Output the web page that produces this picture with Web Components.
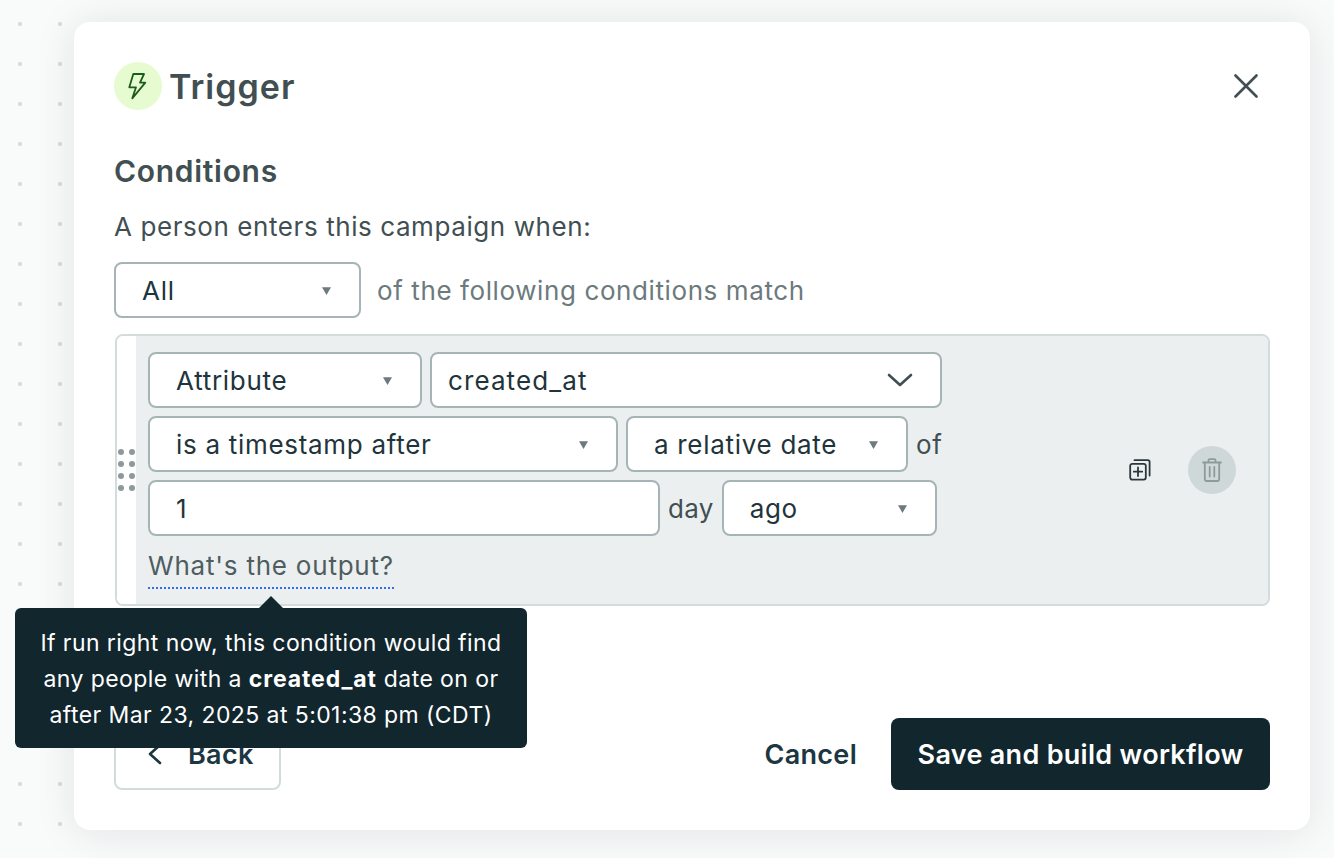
<!DOCTYPE html>
<html lang="en">
<head>
<meta charset="utf-8">
<title>Trigger</title>
<style>
  html, body { margin: 0; height: 100%; }
  body {
    width: 1334px;
    height: 858px;
    overflow: hidden;
    font-family: Inter, "Liberation Sans", sans-serif;
    background-color: #f9fafa;
  }
</style>
</head>
<body>
<trigger-canvas>
  <trigger-card>
    <card-header slot="header">Trigger</card-header>
    <h-title>Conditions</h-title>
    <p-text>A person enters this campaign when:</p-text>
    <match-row></match-row>
    <condition-box>
      <box-row>
        <pick-list style="width:274px" label="Attribute"></pick-list>
        <pick-list style="width:512px;letter-spacing:1.1px" label="created_at" kind="chevron"></pick-list>
      </box-row>
      <box-row>
        <pick-list style="width:470px" label="is a timestamp after"></pick-list>
        <pick-list style="width:282px" label="a relative date"></pick-list>
        <span>of</span>
      </box-row>
      <box-row>
        <pick-list style="width:512px" label="1" kind="input"></pick-list>
        <span style="letter-spacing:0.3px">day</span>
        <pick-list style="width:215px" label="ago"></pick-list>
      </box-row>
      <output-link slot="link">What's the output?</output-link>
    </condition-box>
    <card-footer slot="footer"></card-footer>
    <output-tip slot="overlay">If run right now, this condition would find any people with a <b>created_at</b> date on or after Mar 23, 2025 at 5:01:38 pm (CDT)</output-tip>
  </trigger-card>
</trigger-canvas>

<script>
class TriggerCanvas extends HTMLElement {
  constructor() {
    super();
    this.attachShadow({ mode: "open" });
    this.shadowRoot.innerHTML = `
    <style>
      :host {
        display: block;
        width: 1334px;
        height: 858px;
        box-sizing: border-box;
        padding: 22px 24px 28px 74px;
        background-color: #f9fafa;
        background-image:
          linear-gradient(to right, transparent 80px, #f9fafa 80px),
          radial-gradient(circle at 20px 24px, #d5dee0 0, #d5dee0 1.9px, transparent 2.4px);
        background-size: 100% 100%, 40px 40px;
      }
    </style>
    <slot></slot>`;
  }
}

class TriggerCard extends HTMLElement {
  constructor() {
    super();
    this.attachShadow({ mode: "open" });
    this.shadowRoot.innerHTML = `
    <style>
      :host {
        display: flex;
        flex-direction: column;
        position: relative;
        box-sizing: border-box;
        height: 808px;
        padding: 40px;
        background: #fff;
        border-radius: 16px;
        box-shadow: 0 2px 40px rgba(18, 38, 46, 0.1);
      }
      .foot { margin-top: auto; }
    </style>
    <slot name="header"></slot>
    <slot></slot>
    <div class="foot"><slot name="footer"></slot></div>
    <slot name="overlay"></slot>`;
  }
}

class CardHeader extends HTMLElement {
  constructor() {
    super();
    this.attachShadow({ mode: "open" });
    this.shadowRoot.innerHTML = `
    <style>
      :host {
        display: flex;
        align-items: center;
        height: 48px;
        color: #414f52;
        font-size: 34px;
        font-weight: 600;
        letter-spacing: 1px;
      }
      .badge {
        width: 48px;
        height: 48px;
        border-radius: 50%;
        background: #e6fbd0;
        display: flex;
        align-items: center;
        justify-content: center;
        margin-right: 7px;
      }
      .close { margin-left: auto; margin-right: 12px; display: block; }
    </style>
    <div class="badge">
      <svg width="20" height="28" viewBox="0 0 20 28" fill="none" stroke="#1d5c1c" stroke-width="1.8" stroke-linejoin="round">
        <path d="M5.3 2H16L12 10.700H17.300L4.300 26.300L8 15.300H1.300Z"/>
      </svg>
    </div>
    <slot></slot>
    <svg class="close" width="24" height="24" viewBox="0 0 24 24" fill="none" stroke="#414f52" stroke-width="2.600" stroke-linecap="round">
      <path d="M1.500 1.500L22.500 22.500M22.500 1.500L1.500 22.500"/>
    </svg>`;
  }
}

class HTitle extends HTMLElement {
  constructor() {
    super();
    this.attachShadow({ mode: "open" });
    this.shadowRoot.innerHTML = `
    <style>
      :host {
        display: block;
        margin-top: 42px;
        color: #414f52;
        font-size: 30px;
        line-height: 38px;
        font-weight: 600;
        letter-spacing: 0.7px;
      }
    </style>
    <slot></slot>`;
  }
}

class PText extends HTMLElement {
  constructor() {
    super();
    this.attachShadow({ mode: "open" });
    this.shadowRoot.innerHTML = `
    <style>
      :host {
        display: block;
        margin-top: 19px;
        color: #414f52;
        font-size: 26px;
        line-height: 36px;
        letter-spacing: 0.58px;
      }
    </style>
    <slot></slot>`;
  }
}

class PickList extends HTMLElement {
  constructor() {
    super();
    this.attachShadow({ mode: "open" });
  }

  connectedCallback() {
    const kind = this.getAttribute("kind");
    let arrow = `<svg class="caret" width="9" height="9" viewBox="0 0 8 8"><path d="M0 1H8L4 8Z" fill="#6c7a7d"/></svg>`;
    if (kind === "chevron") {
      arrow = `<svg class="chev" width="26" height="14" viewBox="0 0 26 14" fill="none" stroke="#414f52" stroke-width="2.600" stroke-linecap="round" stroke-linejoin="round"><path d="M2 2L13 12L24 2"/></svg>`;
    } else if (kind === "input") {
      arrow = "";
    }
    this.shadowRoot.innerHTML = `
    <style>
      :host {
        display: flex;
        align-items: center;
        flex: none;
        box-sizing: border-box;
        height: 56px;
        padding: 0 28px 0 26px;
        background: #fff;
        border: 2px solid #a7b4b6;
        border-radius: 8px;
        color: #22343b;
        font-size: 26px;
        letter-spacing: 0.7px;
      }
      :host([kind="chevron"]) { padding: 0 27px 0 16px; }
      span { flex: 1; }
      svg { display: block; }
    </style>
    <span>${this.getAttribute("label")}</span>
    ${arrow}`;
  }
}

class MatchRow extends HTMLElement {
  constructor() {
    super();
    this.attachShadow({ mode: "open" });
    this.shadowRoot.innerHTML = `
    <style>
      :host {
        display: flex;
        align-items: center;
        gap: 16px;
        margin-top: 17px;
        color: #6c7a7d;
        font-size: 26px;
        letter-spacing: 0.6px;
      }
    </style>
    <pick-list style="width:247px" label="All"></pick-list>
    <span>of the following conditions match</span>`;
  }
}

class BoxRow extends HTMLElement {
  constructor() {
    super();
    this.attachShadow({ mode: "open" });
    this.shadowRoot.innerHTML = `
    <style>
      :host {
        display: flex;
        align-items: center;
        gap: 8px;
        color: #414f52;
        font-size: 26px;
        letter-spacing: 0.6px;
      }
    </style>
    <slot></slot>`;
  }
}

class ConditionBox extends HTMLElement {
  constructor() {
    super();
    this.attachShadow({ mode: "open" });
    this.shadowRoot.innerHTML = `
    <style>
      :host {
        display: flex;
        box-sizing: border-box;
        height: 272px;
        margin-top: 16px;
        margin-left: 1px;
        background: #fff;
        border: 2px solid #d3dcdd;
        border-radius: 8px;
        overflow: hidden;
      }
      .handle {
        flex: none;
        width: 19px;
        display: grid;
        grid-template-columns: 6px 6px;
        grid-auto-rows: 6px;
        gap: 6px 5px;
        align-content: center;
        justify-content: center;
        padding-right: 1px;
        box-sizing: border-box;
        background: #fff;
      }
      .handle i { display: block; border-radius: 50%; background: #8d9a9c; }
      .body {
        flex: 1;
        display: flex;
        background: #ebeff0;
        padding: 16px 32px 0 12px;
      }
      .rows {
        display: flex;
        flex-direction: column;
        gap: 8px;
      }
      .link { display: block; }
      .actions {
        margin-left: auto;
        height: 236px;
        display: flex;
        align-items: center;
        gap: 37px;
      }
      .trash {
        width: 48px;
        height: 48px;
        border-radius: 50%;
        background: #cfd8d9;
        display: flex;
        align-items: center;
        justify-content: center;
      }
      svg { display: block; }
    </style>
    <div class="handle"><i></i><i></i><i></i><i></i><i></i><i></i><i></i><i></i></div>
    <div class="body">
      <div class="rows">
        <slot></slot>
        <div class="link"><slot name="link"></slot></div>
      </div>
      <div class="actions">
        <svg width="22" height="22" viewBox="0 0 22 22" fill="none" stroke="#2a383d" stroke-width="1.800" stroke-linejoin="round" stroke-linecap="round">
          <path d="M5.500 1.200H18.800A1.800 1.800 0 0 1 20.600 3V16.500"/>
          <rect x="1.200" y="4.800" width="15.600" height="15.800" rx="2"/>
          <path d="M9 8.500V17M4.800 12.700H13.200"/>
        </svg>
        <div class="trash">
          <svg width="20" height="24" viewBox="0 0 20 24" fill="none" stroke="#8d9a9c" stroke-width="1.800" stroke-linecap="round" stroke-linejoin="round">
            <path d="M1 4.500H19M6.500 4V2.300A1.200 1.200 0 0 1 7.700 1.100H12.300A1.200 1.200 0 0 1 13.500 2.300V4"/>
            <path d="M2.800 4.500V21A2 2 0 0 0 4.800 23H15.200A2 2 0 0 0 17.200 21V4.500"/>
            <path d="M7.700 9V18.500M12.300 9V18.500"/>
          </svg>
        </div>
      </div>
    </div>`;
  }
}

class OutputLink extends HTMLElement {
  constructor() {
    super();
    this.attachShadow({ mode: "open" });
    this.shadowRoot.innerHTML = `
    <style>
      :host {
        display: inline-block;
        color: #4f5d60;
        font-size: 26px;
        line-height: 43px;
        letter-spacing: 0.78px;
        border-bottom: 2px dotted #2f6fed;
      }
    </style>
    <slot></slot>`;
  }
}

class OutputTip extends HTMLElement {
  constructor() {
    super();
    this.attachShadow({ mode: "open" });
    this.shadowRoot.innerHTML = `
    <style>
      :host {
        position: absolute;
        left: -59px;
        top: 586px;
        box-sizing: border-box;
        width: 512px;
        height: 140px;
        padding: 17px 20px;
        background: #12262e;
        border-radius: 6px;
        color: #fff;
        font-size: 23px;
        line-height: 36px;
        letter-spacing: 0.42px;
        text-align: center;
      }
      :host::before {
        content: "";
        position: absolute;
        left: 244px;
        top: -12px;
        border-left: 12px solid transparent;
        border-right: 12px solid transparent;
        border-bottom: 12px solid #12262e;
      }
      ::slotted(b) { font-weight: 700; letter-spacing: 0.9px; }
    </style>
    <slot></slot>`;
  }
}

class CardFooter extends HTMLElement {
  constructor() {
    super();
    this.attachShadow({ mode: "open" });
    this.shadowRoot.innerHTML = `
    <style>
      :host {
        display: flex;
        align-items: center;
        font-size: 27px;
        font-weight: 600;
        letter-spacing: 0.3px;
        color: #1c3742;
      }
      .back {
        box-sizing: border-box;
        width: 167px;
        height: 72px;
        display: flex;
        align-items: center;
        gap: 26px;
        padding-left: 32px;
        border: 2px solid #d3dcdd;
        border-radius: 8px;
      }
      .cancel { margin-left: auto; margin-right: 34px; }
      .save {
        box-sizing: border-box;
        height: 72px;
        width: 379px;
        display: flex;
        align-items: center;
        justify-content: center;
        background: #12262e;
        color: #fff;
        border-radius: 8px;
      }
      svg { display: block; }
    </style>
    <div class="back">
      <svg width="14" height="22" viewBox="0 0 14 22" fill="none" stroke="#1c3742" stroke-width="2.600" stroke-linecap="round" stroke-linejoin="round"><path d="M12 2L2 11L12 20"/></svg>
      <span>Back</span>
    </div>
    <span class="cancel">Cancel</span>
    <div class="save">Save and build workflow</div>`;
  }
}

customElements.define("trigger-canvas", TriggerCanvas);
customElements.define("trigger-card", TriggerCard);
customElements.define("card-header", CardHeader);
customElements.define("h-title", HTitle);
customElements.define("p-text", PText);
customElements.define("pick-list", PickList);
customElements.define("match-row", MatchRow);
customElements.define("box-row", BoxRow);
customElements.define("condition-box", ConditionBox);
customElements.define("output-link", OutputLink);
customElements.define("output-tip", OutputTip);
customElements.define("card-footer", CardFooter);
</script>
</body>
</html>
